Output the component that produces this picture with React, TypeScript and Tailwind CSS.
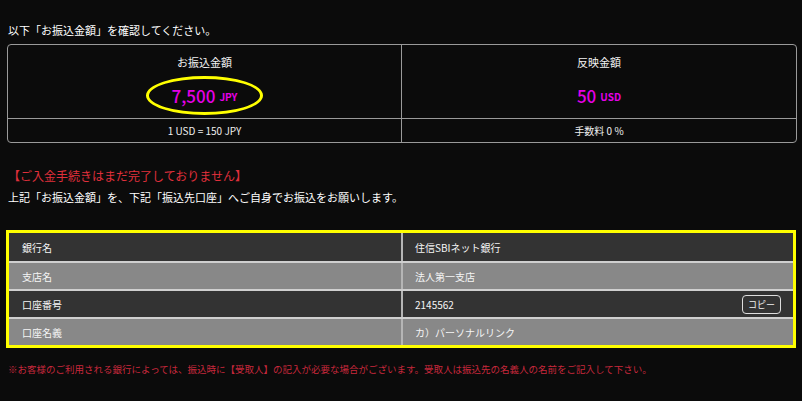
import React from 'react';

const accountRows = [
  { label: '銀行名', value: '住信SBIネット銀行', tone: 'dark' },
  { label: '支店名', value: '法人第一支店', tone: 'light' },
  { label: '口座番号', value: '2145562', tone: 'dark', copy: true },
  { label: '口座名義', value: 'カ）パーソナルリンク', tone: 'light' },
];

function AmountCell({
  title,
  amount,
  unit,
  circled,
  divider,
}: {
  title: string;
  amount: string;
  unit: string;
  circled?: boolean;
  divider?: boolean;
}) {
  return (
    <div
      className={`flex flex-col items-center pt-[9px] pb-[3px] ${
        divider ? 'border-r border-[#9a9a9a]' : ''
      }`}
    >
      <div className="text-[11px] leading-[16px] text-[#f2f2f2]">{title}</div>
      <div
        className={`mt-[6px] flex h-[39px] w-[117px] items-center justify-center rounded-[50%] border-[3px] ${
          circled ? 'border-[#ffff00]' : 'border-transparent'
        }`}
      >
        <span className="text-[17px] font-medium leading-none text-[#e600e6]">{amount}</span>
        <span className="ml-[4px] mt-[3px] text-[10px] font-bold leading-none text-[#e600e6]">
          {unit}
        </span>
      </div>
    </div>
  );
}

export default function App() {
  return (
    <div className="min-h-[401px] bg-[#0b0b0b] pt-[23px] font-['Noto_Sans_CJK_JP','Noto_Sans',sans-serif] text-white">
      <p className="px-[8px] text-[11px] leading-[14px]">以下「お振込金額」を確認してください。</p>

      <div className="ml-[7px] mt-[7px] w-[790px] rounded-[4px] border border-[#9a9a9a]">
        <div className="grid grid-cols-2">
          <AmountCell title="お振込金額" amount="7,500" unit="JPY" circled divider />
          <AmountCell title="反映金額" amount="50" unit="USD" />
        </div>
        <div className="grid h-[24px] grid-cols-2 border-t border-[#9a9a9a] text-[10px] text-[#eeeeee]">
          <div className="flex items-center justify-center border-r border-[#9a9a9a]">1 USD = 150 JPY</div>
          <div className="flex items-center justify-center">手数料 0 %</div>
        </div>
      </div>

      <p className="mt-[25px] px-[8px] text-[12px] leading-[16px] text-[#e0303c]">
        【ご入金手続きはまだ完了しておりません】
      </p>
      <p className="mt-[6px] px-[8px] text-[11px] leading-[14px]">
        上記「お振込金額」を、下記「振込先口座」へご自身でお振込をお願いします。
      </p>

      <div className="mx-[6px] mt-[26px] border-[3px] border-[#ffff00]">
        {accountRows.map((row, i) => (
          <div
            key={row.label}
            className={`grid h-[28px] grid-cols-2 text-[10px] text-[#f5f5f5] ${
              i > 0 ? 'border-t-2 border-[#cfcfcf]' : ''
            } ${row.tone === 'dark' ? 'bg-[#333333]' : 'bg-[#888888]'}`}
          >
            <div className="flex items-center pl-[13px]">{row.label}</div>
            <div className="flex items-center justify-between border-l-2 border-[#b5b5b5] pl-[12px] pr-[12px]">
              <span>{row.value}</span>
              {row.copy ? (
                <button className="flex h-[19px] w-[39px] items-center justify-center rounded-[4px] border border-[#dddddd] text-[9px] leading-none text-[#f0f0f0]">
                  コピー
                </button>
              ) : null}
            </div>
          </div>
        ))}
      </div>

      <p className="mt-[15px] px-[8px] text-[9.5px] leading-[12px] text-[#c8283c]">
        ※お客様のご利用される銀行によっては、振込時に【受取人】の記入が必要な場合がございます。受取人は振込先の名義人の名前をご記入して下さい。
      </p>
    </div>
  );
}
